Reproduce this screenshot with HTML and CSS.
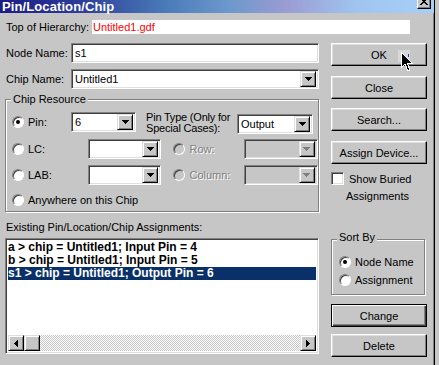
FILE: index.html
```html
<!DOCTYPE html>
<html>
<head>
    <link rel="stylesheet" href="styles.css">
</head>
<body>
    <div class="window">
        <div class="titlebar">
            <span class="title">Pin/Location/Chip</span>
            <span class="closeBtn">
                <svg width="8" height="7" viewBox="0 0 8 7" shape-rendering="crispEdges"><path d="M0 0h2v1h1v1h2v-1h1v-1h2v1h-1v1h-1v1h-1v1h1v1h1v1h1v1h-2v-1h-1v-1h-2v1h-1v1h-2v-1h1v-1h1v-1h1v-1h-1v-1h-1v-1h-1z" fill="#000"/></svg>
            </span>
        </div>
        <div class="dialog">
            <div class="topRow">
                <span class="topLabel">Top of Hierarchy:</span>
                <span class="hierValue">Untitled1.gdf</span>
            </div>
            <div class="columns">
                <div class="leftCol">
                    <div class="field">
                        <span class="fieldLabel">Node Name:</span>
                        <div class="textbox">s1</div>
                    </div>
                    <div class="field chipField">
                        <span class="fieldLabel">Chip Name:</span>
                        <div class="combo wide">
                            <span class="comboValue">Untitled1</span>
                            <span class="dropBtn"><svg width="7" height="4" viewBox="0 0 7 4" shape-rendering="crispEdges"><path d="M0 0h7v1h-1v1h-1v1h-1v1h-1v-1h-1v-1h-1v-1h-1z" fill="#000"/></svg></span>
                        </div>
                    </div>

                    <div class="groupBox resourceBox">
                        <span class="legend">Chip Resource</span>
                        <div class="resRow firstRow">
                            <div class="opt pinOpt"><span class="radio on"></span>Pin:</div>
                            <div class="combo pinCombo">
                                <span class="comboValue">6</span>
                                <span class="dropBtn"><svg width="7" height="4" viewBox="0 0 7 4" shape-rendering="crispEdges"><path d="M0 0h7v1h-1v1h-1v1h-1v1h-1v-1h-1v-1h-1v-1h-1z" fill="#000"/></svg></span>
                            </div>
                            <div class="pinTypeLabel">Pin Type (Only for<br>Special Cases):</div>
                            <div class="combo typeCombo">
                                <span class="comboValue">Output</span>
                                <span class="dropBtn"><svg width="7" height="4" viewBox="0 0 7 4" shape-rendering="crispEdges"><path d="M0 0h7v1h-1v1h-1v1h-1v1h-1v-1h-1v-1h-1v-1h-1z" fill="#000"/></svg></span>
                            </div>
                        </div>
                        <div class="resRow lcRow">
                            <div class="opt longOpt"><span class="radio"></span>LC:</div>
                            <div class="combo smallCombo">
                                <span class="comboValue"></span>
                                <span class="dropBtn"><svg width="7" height="4" viewBox="0 0 7 4" shape-rendering="crispEdges"><path d="M0 0h7v1h-1v1h-1v1h-1v1h-1v-1h-1v-1h-1v-1h-1z" fill="#000"/></svg></span>
                            </div>
                            <div class="opt disabledOpt"><span class="radio off"></span>Row:</div>
                            <div class="combo typeCombo disabled">
                                <span class="comboValue"></span>
                                <span class="dropBtn"><svg width="7" height="4" viewBox="0 0 7 4" shape-rendering="crispEdges"><path d="M0 0h7v1h-1v1h-1v1h-1v1h-1v-1h-1v-1h-1v-1h-1z" fill="#808080"/></svg></span>
                            </div>
                        </div>
                        <div class="resRow labRow">
                            <div class="opt longOpt"><span class="radio"></span>LAB:</div>
                            <div class="combo smallCombo">
                                <span class="comboValue"></span>
                                <span class="dropBtn"><svg width="7" height="4" viewBox="0 0 7 4" shape-rendering="crispEdges"><path d="M0 0h7v1h-1v1h-1v1h-1v1h-1v-1h-1v-1h-1v-1h-1z" fill="#000"/></svg></span>
                            </div>
                            <div class="opt disabledOpt"><span class="radio off"></span>Column:</div>
                            <div class="combo typeCombo disabled">
                                <span class="comboValue"></span>
                                <span class="dropBtn"><svg width="7" height="4" viewBox="0 0 7 4" shape-rendering="crispEdges"><path d="M0 0h7v1h-1v1h-1v1h-1v1h-1v-1h-1v-1h-1v-1h-1z" fill="#808080"/></svg></span>
                            </div>
                        </div>
                        <div class="resRow anyRow">
                            <div class="opt"><span class="radio"></span>Anywhere on this Chip</div>
                        </div>
                    </div>

                    <div class="listLabel">Existing Pin/Location/Chip Assignments:</div>
                    <div class="listbox">
                        <div class="listItems">
                            <div class="item">a &gt; chip = Untitled1; Input Pin = 4</div>
                            <div class="item">b &gt; chip = Untitled1; Input Pin = 5</div>
                            <div class="item selected">s1 &gt; chip = Untitled1; Output Pin = 6</div>
                        </div>
                        <div class="hscroll">
                            <span class="sbBtn"><svg width="4" height="7" viewBox="0 0 4 7" shape-rendering="crispEdges"><path d="M3 0h1v7h-1v-1h-1v-1h-1v-1h-1v-1h1v-1h1v-1h1z" fill="#000"/></svg></span>
                            <span class="sbThumb"></span>
                            <span class="sbTrack"></span>
                            <span class="sbBtn"><svg width="4" height="7" viewBox="0 0 4 7" shape-rendering="crispEdges"><path d="M0 0h1v1h1v1h1v1h1v1h-1v1h-1v1h-1v1h-1z" fill="#000"/></svg></span>
                        </div>
                    </div>
                </div>

                <div class="rightCol">
                    <div class="btn okBtn">OK</div>
                    <div class="btn closeDlg">Close</div>
                    <div class="btn searchBtn">Search...</div>
                    <div class="btn assignBtn">Assign Device...</div>
                    <div class="checkRow">
                        <span class="checkbox"></span>
                        <span>Show Buried</span>
                    </div>
                    <div class="checkCont">Assignments</div>

                    <div class="groupBox sortBox">
                        <span class="legend">Sort By</span>
                        <div class="sortOpt"><span class="radio on"></span>Node Name</div>
                        <div class="sortOpt"><span class="radio"></span>Assignment</div>
                    </div>

                    <div class="btn default changeBtn">Change</div>
                    <div class="btn deleteBtn">Delete</div>
                </div>
            </div>
        </div>
    </div>

    <!-- mouse pointer resting on the OK button -->
    <svg class="cursor" width="16" height="24" viewBox="0 0 16 24" shape-rendering="crispEdges">
        <rect x="0" y="0" width="12" height="12" fill="#d8d8d8"/>
        <rect x="10" y="4" width="1" height="3" fill="#2040c0"/>
        <path d="M3 2v16l4-4 3 7 2-1-3-7h5z" fill="#000" stroke="#fff" stroke-width="1"/>
    </svg>
</body>
</html>
```

FILE: styles.css
```css
* {
    box-sizing: border-box;
}
body {
    margin: 0;
    width: 439px;
    height: 365px;
    overflow: hidden;
    position: relative;
    background-color: #c6c6c6;
    font-family: 'Liberation Sans', Arial, sans-serif;
    font-size: 11px;
    color: #000;
}
.window {
    width: 435px;
    height: 365px;
    border-right: 1px solid #000;
    box-shadow: inset -1px 0 #808080;
}
.titlebar {
    height: 13px;
    display: flex;
    justify-content: space-between;
    align-items: flex-start;
    padding-left: 2px;
    background: linear-gradient(90deg, #1c1c86 0%, #2c3c98 18%, #4a7ab8 38%, #6a98cc 52%, #9a9cd2 66%, #a0c4f0 82%, #a6d0f8 100%);
}
.title {
    color: #fff;
    font-weight: bold;
    font-size: 13px;
    line-height: 13px;
    letter-spacing: 0.1px;
}
.closeBtn {
    width: 14px;
    height: 14px;
    margin-top: -5px;
    margin-right: 3px;
    display: flex;
    align-items: flex-end;
    justify-content: center;
    padding-bottom: 3px;
    background-color: #c6c6c6;
    border: 1px solid;
    border-color: #fff #000 #000 #fff;
    box-shadow: inset -1px -1px #808080;
}
.dialog {
    padding: 7px 0 0 5px;
}
.topRow {
    display: flex;
    align-items: center;
    height: 14px;
}
.topLabel {
    width: 87px;
    padding-left: 1px;
}
.hierValue {
    width: 318px;
    height: 14px;
    line-height: 14px;
    padding-left: 1px;
    background-color: #fff;
    color: #f00;
}
.columns {
    display: flex;
    gap: 12px;
    margin-top: 9px;
}
.leftCol {
    width: 314px;
    display: flex;
    flex-direction: column;
}
.rightCol {
    width: 96px;
    display: flex;
    flex-direction: column;
}

/* sunken fields */
.textbox,
.combo,
.listbox,
.checkbox {
    background-color: #fff;
    border: 1px solid;
    border-color: #808080 #fff #fff #808080;
    box-shadow: inset 1px 1px #404040, inset -1px -1px #dfdfdf;
}
.field {
    display: flex;
    align-items: center;
    height: 20px;
}
.chipField {
    margin-top: 6px;
}
.fieldLabel {
    width: 66px;
    padding-left: 1px;
}
.textbox {
    width: 248px;
    height: 20px;
    line-height: 18px;
    padding-left: 3px;
}
.combo {
    height: 20px;
    display: flex;
    align-items: center;
    padding: 2px;
}
.combo.wide {
    width: 248px;
}
.comboValue {
    flex: 1;
    padding-left: 1px;
    line-height: 16px;
}
.dropBtn,
.sbBtn,
.sbThumb {
    width: 16px;
    height: 16px;
    flex: none;
    display: flex;
    align-items: center;
    justify-content: center;
    background-color: #c6c6c6;
    border: 1px solid;
    border-color: #dfdfdf #000 #000 #dfdfdf;
    box-shadow: inset 1px 1px #fff, inset -1px -1px #808080;
}
.combo.disabled {
    background-color: #c6c6c6;
}

/* etched group boxes */
.groupBox {
    position: relative;
    border: 1px solid #808080;
    box-shadow: inset 1px 1px #fff, 1px 1px #fff;
}
.legend {
    position: absolute;
    left: 5px;
    top: -7px;
    padding: 0 2px;
    line-height: 13px;
    background-color: #c6c6c6;
}
.resourceBox {
    height: 113px;
    margin-top: 10px;
    padding: 12px 0 0 6px;
}
.resRow {
    display: flex;
    align-items: center;
    height: 20px;
}
.firstRow {
    height: 22px;
    align-items: flex-start;
}
.lcRow {
    margin-top: 5px;
}
.labRow {
    margin-top: 6px;
}
.anyRow {
    margin-top: 5px;
}
.opt {
    display: flex;
    align-items: center;
    height: 20px;
    white-space: nowrap;
}
.pinOpt {
    width: 59px;
}
.longOpt {
    width: 78px;
}
.pinCombo {
    width: 65px;
}
.smallCombo {
    width: 75px;
}
.pinTypeLabel {
    width: 91px;
    margin-left: 10px;
    line-height: 11px;
    white-space: nowrap;
    letter-spacing: -0.2px;
}
.typeCombo {
    width: 76px;
}
.firstRow .typeCombo {
    margin-top: 2px;
}
.disabledOpt {
    width: 72px;
    margin-left: 12px;
    color: #808080;
    text-shadow: 1px 1px #fff;
}
.radio {
    width: 12px;
    height: 12px;
    flex: none;
    margin-right: 4px;
    border-radius: 50%;
    border: 1px solid;
    border-color: #808080 #fff #fff #808080;
    box-shadow: inset 1px 1px #404040;
    background-color: #fff;
    display: flex;
    align-items: center;
    justify-content: center;
}
.radio.on::after {
    content: '';
    width: 4px;
    height: 4px;
    border-radius: 50%;
    background-color: #000;
}
.radio.off {
    background-color: #c6c6c6;
}

/* assignment list */
.listLabel {
    margin-top: 9px;
    height: 13px;
    line-height: 13px;
    padding-left: 1px;
}
.listbox {
    margin-top: 4px;
    height: 116px;
    padding: 2px;
    display: flex;
    flex-direction: column;
}
.listItems {
    flex: 1;
}
.item {
    height: 13px;
    line-height: 13px;
    font-size: 12px;
    font-weight: bold;
    white-space: nowrap;
}
.item.selected {
    background-color: #0a306a;
    color: #fff;
}
.hscroll {
    display: flex;
    height: 16px;
}
.sbTrack {
    flex: 1;
    background: repeating-conic-gradient(#c6c6c6 0 25%, #fff 0 50%) 0 0 / 2px 2px;
}

/* right column */
.btn {
    width: 96px;
    height: 23px;
    display: flex;
    align-items: center;
    justify-content: center;
    background-color: #c6c6c6;
    border: 1px solid;
    border-color: #fff #000 #000 #fff;
    box-shadow: inset -1px -1px #808080, inset 1px 1px #dfdfdf;
}
.btn.default {
    border-color: #000;
    box-shadow: inset 1px 1px #fff, inset -1px -1px #404040, inset -2px -2px #808080;
}
.closeDlg {
    margin-top: 10px;
}
.searchBtn {
    margin-top: 9px;
}
.assignBtn {
    margin-top: 10px;
}
.checkRow {
    display: flex;
    align-items: center;
    gap: 5px;
    margin-top: 8px;
    height: 13px;
}
.checkbox {
    width: 13px;
    height: 13px;
    flex: none;
}
.checkCont {
    margin-top: 5px;
    padding-left: 15px;
    line-height: 13px;
}
.sortBox {
    width: 94px;
    height: 56px;
    margin-top: 36px;
    padding: 14px 0 0 7px;
}
.sortBox .legend {
    top: -9px;
}
.sortOpt {
    display: flex;
    align-items: center;
    height: 16px;
    margin-bottom: 2px;
}
.changeBtn {
    margin-top: 9px;
}
.deleteBtn {
    margin-top: 7px;
}
.cursor {
    position: absolute;
    left: 398px;
    top: 50px;
}
```
